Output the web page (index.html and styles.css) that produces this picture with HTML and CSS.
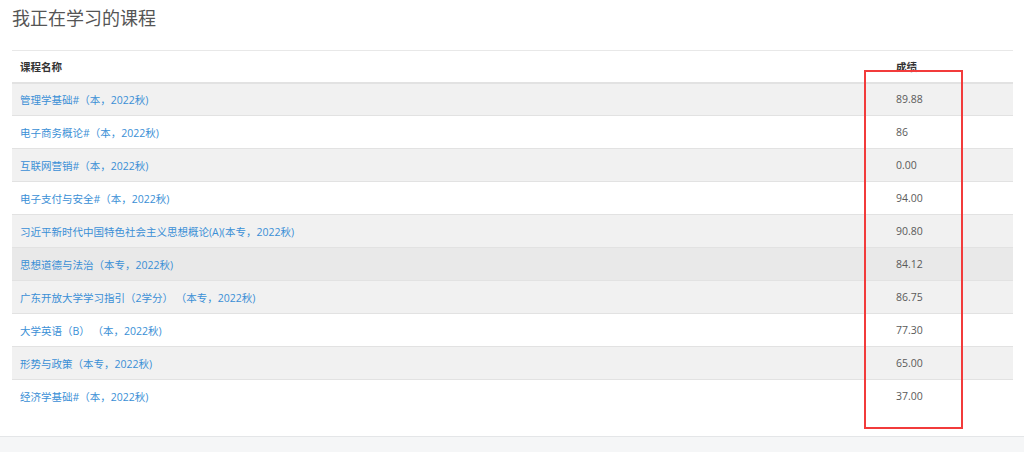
FILE: index.html
```html
<!DOCTYPE html>
<html lang="zh-CN">
<head>
  <meta charset="UTF-8">
  <meta name="viewport" content="width=device-width, initial-scale=1.0">
  <title>我正在学习的课程</title>
  <link rel="stylesheet" href="styles.css">
</head>
<body>

  <div class="main">
    <h2 class="title">我正在学习的课程</h2>

    <div class="table-wrap">
      <table class="courses">
        <thead>
          <tr>
            <th>课程名称</th>
            <th class="score">成绩</th>
          </tr>
        </thead>
        <tbody>
          <tr><td><a href="#">管理学基础#（本，2022秋)</a></td><td class="score">89.88</td></tr>
          <tr><td><a href="#">电子商务概论#（本，2022秋)</a></td><td class="score">86</td></tr>
          <tr><td><a href="#">互联网营销#（本，2022秋)</a></td><td class="score">0.00</td></tr>
          <tr><td><a href="#">电子支付与安全#（本，2022秋)</a></td><td class="score">94.00</td></tr>
          <tr><td><a href="#">习近平新时代中国特色社会主义思想概论(A)(本专，2022秋)</a></td><td class="score">90.80</td></tr>
          <tr class="hover"><td><a href="#">思想道德与法治（本专，2022秋)</a></td><td class="score">84.12</td></tr>
          <tr><td><a href="#">广东开放大学学习指引（2学分） （本专，2022秋)</a></td><td class="score">86.75</td></tr>
          <tr><td><a href="#">大学英语（B） （本，2022秋)</a></td><td class="score">77.30</td></tr>
          <tr><td><a href="#">形势与政策（本专，2022秋)</a></td><td class="score">65.00</td></tr>
          <tr><td><a href="#">经济学基础#（本，2022秋)</a></td><td class="score">37.00</td></tr>
        </tbody>
      </table>

      <!-- 标注框 -->
      <div class="mark"></div>
    </div>
  </div>

  <div class="footer"></div>

</body>
</html>
```

FILE: styles.css
```css
* {
  margin: 0;
  padding: 0;
  box-sizing: border-box;
}
html, body {
  width: 100%;
  height: 100%;
  background-color: #fff;
  font-family: 'Open Sans', 'Noto Sans CJK SC', sans-serif;
  color: #555;
}
body {
  display: flex;
  flex-direction: column;
}
.main {
  padding: 0 11px 0 12px;
  height: 436px;
}
.title {
  font-size: 18px;
  font-weight: normal;
  color: #555;
  line-height: 36px;
  height: 50px;
}
.table-wrap {
  position: relative;
}
.courses {
  width: 100%;
  border-collapse: collapse;
  font-size: 10.5px;
  border-top: 1px solid #e8e8e8;
}
.courses th,
.courses td {
  text-align: left;
  padding: 0 8px;
  height: 33px;
  border-bottom: 1px solid #e2e2e2;
  vertical-align: middle;
}
.courses th {
  color: #333;
  font-weight: bold;
  height: 32px;
  border-bottom: 2px solid #e2e2e2;
}
.courses th.score {
  vertical-align: top;
  padding-top: 8px;
}
.courses .score {
  width: 125px;
}
.courses td.score {
  color: #5a5a5a;
}
.courses tbody tr:nth-child(odd) {
  background-color: #f1f1f1;
}
.courses tbody tr.hover {
  background-color: #e9e9e9;
}
.courses tbody tr:last-child td {
  border-bottom: none;
}
.courses a {
  color: #3a8fd6;
  text-decoration: none;
}
.mark {
  position: absolute;
  left: 852px;
  top: 20px;
  width: 99px;
  height: 359px;
  border: 2px solid #f23b3b;
}
.footer {
  flex: 1;
  background-color: #f5f6f7;
  border-top: 1px solid #e4e6e8;
}
```
